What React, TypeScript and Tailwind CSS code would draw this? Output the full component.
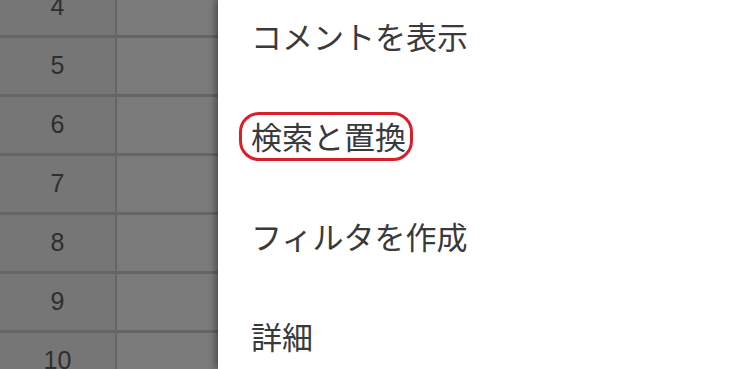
const rows = ['4', '5', '6', '7', '8', '9', '10'];

const menu = ['コメントを表示', '検索と置換', 'フィルタを作成', '詳細'];

export default function App() {
  return (
    <div className="flex h-[369px] w-[747px] overflow-hidden bg-white">
      {/* spreadsheet behind the menu */}
      <div className="w-[218px] shrink-0 bg-[#7a7a7b]">
        <div className="-mt-[21px]">
          {rows.map((n) => (
            <div key={n} className="flex h-[59px] border-b-[3px] border-[#656566]">
              <div className="flex w-[117px] items-center justify-center border-r-2 border-[#656566] bg-[#767677] font-['Liberation_Sans',sans-serif] text-[25px] text-[#2e2e2f]">
                {n}
              </div>
              <div className="flex-1" />
            </div>
          ))}
        </div>
      </div>

      {/* menu panel */}
      <div className="relative flex-1 bg-white shadow-[-3px_0_6px_rgba(0,0,0,0.35)]">
        <div className="-mt-[14px] pl-[33px] font-['Noto_Sans_CJK_JP',sans-serif] text-[31px] text-[#3a3a3a]">
          {menu.map((m, i) => (
            <div key={m} className="flex h-[100px] items-center">
              {i === 1 ? (
                <span className="relative">
                  {m}
                  <span className="absolute -left-[12px] -right-[7px] -top-[1px] -bottom-[2px] rounded-[20px] border-[3px] border-[#d91f2a]" />
                </span>
              ) : (
                m
              )}
            </div>
          ))}
        </div>
      </div>
    </div>
  );
}
